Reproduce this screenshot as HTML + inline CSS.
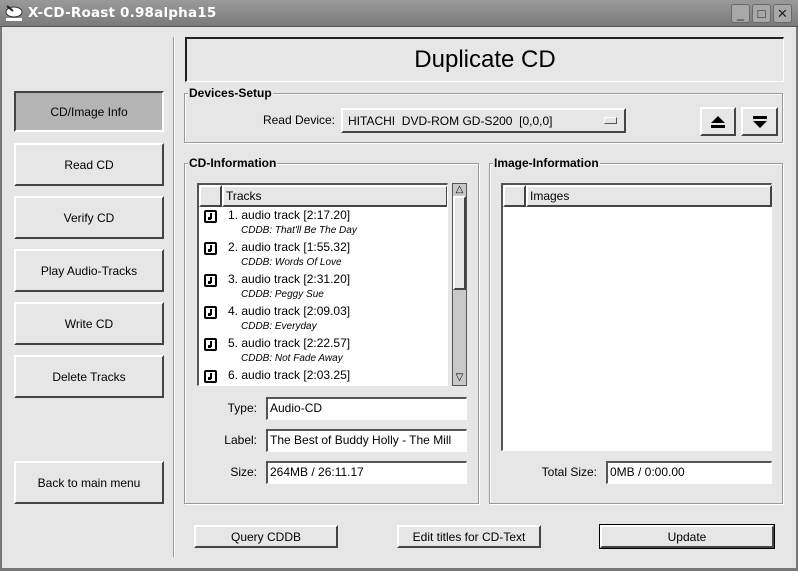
<!DOCTYPE html>
<html><head><meta charset="utf-8"><style>
*{box-sizing:border-box;margin:0;padding:0}
body{width:798px;height:571px;background:#e6e6e6;font-family:"Liberation Sans","DejaVu Sans",sans-serif;font-size:12px;color:#000;position:relative;overflow:hidden}
.a{position:absolute}
.tb{left:0;top:0;width:798px;height:27px;background:linear-gradient(#9a9a9a,#7a7a7a);border-bottom:1px solid #555}
.tt{left:28px;top:5px;color:#fff;font-family:"DejaVu Sans","Liberation Sans",sans-serif;font-weight:bold;font-size:13.5px;letter-spacing:0.2px}
.wb{top:4px;width:19px;height:19px;border:1px solid #6a6a6a;border-radius:3px;background:#a8a8a8;color:#222;font-size:13px;text-align:center;line-height:17px}
.btn{background:#e6e6e6;border-top:2px solid #fff;border-left:2px solid #fff;border-right:2px solid #444;border-bottom:2px solid #444;display:flex;align-items:center;justify-content:center;font-size:12px}
.inset{background:#fff;border-top:2px solid #555;border-left:2px solid #555;border-right:1px solid #fff;border-bottom:1px solid #fff}
.fr{border:1px solid #999;box-shadow:inset 1px 1px 0 #fff,1px 1px 0 #fff}
.fl{background:#e6e6e6;font-weight:bold;font-size:12px;padding:0 1px;top:-8px;left:3px;position:absolute}
.fld{background:#fff;border-top:2px solid #555;border-left:2px solid #555;border-right:1px solid #fff;border-bottom:1px solid #fff;padding-left:2px;line-height:18px;font-size:12px;white-space:nowrap;overflow:hidden}
.lbl{font-size:12px;text-align:right}
.row{position:absolute;left:4px;font-size:12px}
.ic{position:absolute;left:5px;width:13px;height:13px;border:2px solid #000;border-radius:2px;background:#fff}
.ic:after{content:"";position:absolute;left:4px;top:1px;width:2px;height:6px;background:#000}
.ic:before{content:"";position:absolute;left:2px;top:5px;width:3px;height:3px;background:#000}
.cd{position:absolute;left:42px;font-style:italic;font-size:10px}
</style></head><body>
<div class="a tb"></div>
<svg class="a" style="left:4px;top:4px" width="20" height="19"><ellipse cx="10" cy="8" rx="8" ry="5" fill="#fff" stroke="#333"/><line x1="3" y1="2" x2="9" y2="7" stroke="#222" stroke-width="2"/><rect x="2" y="14" width="16" height="3" fill="#fff"/></svg>
<div class="a tt">X-CD-Roast 0.98alpha15</div>
<div class="a wb" style="left:731px">_</div>
<div class="a wb" style="left:752px">□</div>
<div class="a wb" style="left:773px">✕</div>
<div class="a" style="left:0;top:27px;width:798px;height:544px;border-left:2px solid #777;border-right:2px solid #777;border-bottom:3px solid #777"></div>

<div class="a btn" style="left:14px;top:91px;width:150px;height:41px;background:#b4b4b4;border-top-color:#444;border-left-color:#444;border-right-color:#fff;border-bottom-color:#fff">CD/Image Info</div>
<div class="a btn" style="left:14px;top:143px;width:150px;height:43px">Read CD</div>
<div class="a btn" style="left:14px;top:196px;width:150px;height:43px">Verify CD</div>
<div class="a btn" style="left:14px;top:249px;width:150px;height:43px">Play Audio-Tracks</div>
<div class="a btn" style="left:14px;top:302px;width:150px;height:43px">Write CD</div>
<div class="a btn" style="left:14px;top:355px;width:150px;height:43px">Delete Tracks</div>
<div class="a btn" style="left:14px;top:461px;width:150px;height:43px">Back to main menu</div>
<div class="a" style="left:173px;top:37px;width:2px;height:520px;border-left:1px solid #999;border-right:1px solid #fff"></div>

<div class="a" style="left:185px;top:37px;width:599px;height:45px;border-top:2px solid #222;border-left:2px solid #222;border-right:1px solid #fff;border-bottom:1px solid #fff;font-size:24px;text-align:center;line-height:41px">Duplicate CD</div>

<div class="a fr" style="left:184px;top:93px;width:599px;height:50px"><span class="fl">Devices-Setup</span></div>
<div class="a lbl" style="left:240px;top:113px;width:95px">Read Device:</div>
<div class="a btn" style="left:341px;top:108px;width:285px;height:25px;justify-content:flex-start;padding-left:5px">HITACHI&nbsp; DVD-ROM GD-S200&nbsp; [0,0,0]</div>
<div class="a" style="left:604px;top:117px;width:13px;height:7px;border:1px solid #555;border-top-color:#fff;border-left-color:#fff"></div>
<div class="a btn" style="left:700px;top:107px;width:36px;height:29px"><svg width="16" height="14"><path d="M1 8L8 1L15 8Z M1 10H15V13H1Z" fill="#000"/></svg></div>
<div class="a btn" style="left:741px;top:107px;width:37px;height:29px"><svg width="16" height="14"><path d="M1 1H15V4H1Z M1 6H15L8 13Z" fill="#000"/></svg></div>

<div class="a fr" style="left:184px;top:163px;width:295px;height:341px"><span class="fl">CD-Information</span></div>
<div class="a fr" style="left:489px;top:163px;width:294px;height:341px"><span class="fl">Image-Information</span></div>

<div class="a inset" style="left:197px;top:183px;width:251px;height:203px;overflow:hidden">
 <div class="a btn" style="left:0;top:0;width:23px;height:22px"></div>
 <div class="a btn" style="left:23px;top:0;width:226px;height:22px;justify-content:flex-start;padding-left:2px">Tracks</div>
 <div class="ic" style="top:25px"></div><div class="row" style="left:29px;top:23px">1. audio track [2:17.20]</div><div class="cd" style="top:40px">CDDB: That'll Be The Day</div>
 <div class="ic" style="top:57px"></div><div class="row" style="left:29px;top:55px">2. audio track [1:55.32]</div><div class="cd" style="top:72px">CDDB: Words Of Love</div>
 <div class="ic" style="top:89px"></div><div class="row" style="left:29px;top:87px">3. audio track [2:31.20]</div><div class="cd" style="top:104px">CDDB: Peggy Sue</div>
 <div class="ic" style="top:121px"></div><div class="row" style="left:29px;top:119px">4. audio track [2:09.03]</div><div class="cd" style="top:136px">CDDB: Everyday</div>
 <div class="ic" style="top:153px"></div><div class="row" style="left:29px;top:151px">5. audio track [2:22.57]</div><div class="cd" style="top:168px">CDDB: Not Fade Away</div>
 <div class="ic" style="top:185px"></div><div class="row" style="left:29px;top:183px">6. audio track [2:03.25]</div>
</div>
<div class="a" style="left:452px;top:183px;width:15px;height:203px;background:#c8c8c8;border:1px solid #555">
 <div class="a" style="left:0;top:0;width:13px;height:12px;font-size:10px;line-height:12px;text-align:center">△</div>
 <div class="a btn" style="left:0;top:12px;width:13px;height:94px"></div>
 <div class="a" style="left:0;top:188px;width:13px;height:12px;font-size:10px;line-height:12px;text-align:center">▽</div>
</div>

<div class="a lbl" style="left:200px;top:401px;width:57px">Type:</div>
<div class="a fld" style="left:266px;top:397px;width:201px;height:23px">Audio-CD</div>
<div class="a lbl" style="left:200px;top:433px;width:57px">Label:</div>
<div class="a fld" style="left:266px;top:429px;width:201px;height:23px">The Best of Buddy Holly - The Mill</div>
<div class="a lbl" style="left:200px;top:465px;width:57px">Size:</div>
<div class="a fld" style="left:266px;top:461px;width:201px;height:23px">264MB / 26:11.17</div>

<div class="a inset" style="left:501px;top:183px;width:271px;height:268px">
 <div class="a btn" style="left:0;top:0;width:23px;height:22px"></div>
 <div class="a btn" style="left:23px;top:0;width:246px;height:22px;justify-content:flex-start;padding-left:2px">Images</div>
</div>
<div class="a lbl" style="left:500px;top:465px;width:97px">Total Size:</div>
<div class="a fld" style="left:606px;top:461px;width:166px;height:23px">0MB / 0:00.00</div>

<div class="a btn" style="left:194px;top:525px;width:144px;height:23px">Query CDDB</div>
<div class="a btn" style="left:397px;top:525px;width:144px;height:23px">Edit titles for CD-Text</div>
<div class="a btn" style="left:600px;top:525px;width:174px;height:23px;outline:1px solid #000">Update</div>
</body></html>
